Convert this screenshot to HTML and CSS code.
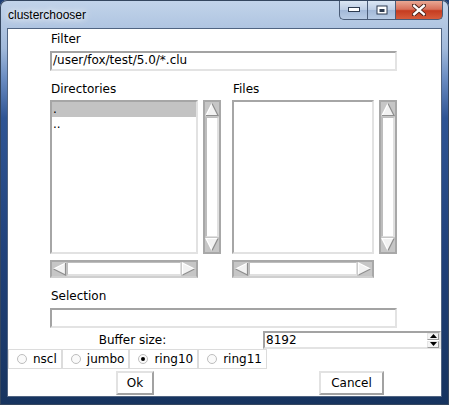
FILE: index.html
```html
<!DOCTYPE html>
<html>
<head>
<meta charset="utf-8">
<title>clusterchooser</title>
<link rel="stylesheet" href="styles.css">
</head>
<body>
<div class="window">
  <div class="titlebar">
    <span class="title">clusterchooser</span>
    <div class="caps">
      <div class="cap min"><svg width="12" height="6" viewBox="0 0 12 6"><rect x="0.5" y="0.5" width="11" height="4" fill="#fff" stroke="#2d3b50"/></svg></div>
      <div class="cap max"><svg width="12" height="10" viewBox="0 0 12 10"><rect x="0.5" y="0.5" width="11" height="9" fill="#2d3b50"/><rect x="1.5" y="1.5" width="9" height="7" fill="#fff"/><rect x="3.5" y="4" width="5" height="3" fill="#2d3b50"/></svg></div>
      <div class="cap close"><svg width="14" height="12" viewBox="0 0 14 12"><path d="M2 1.5 L12 10.5 M12 1.5 L2 10.5" stroke="#4a2018" stroke-width="4.2" stroke-linecap="square"/><path d="M2.2 1.8 L11.8 10.2 M11.8 1.8 L2.2 10.2" stroke="#fff" stroke-width="2.4" stroke-linecap="square"/></svg></div>
    </div>
  </div>
  <div class="client">
    <div class="label">Filter</div>
    <div class="entry">/user/fox/test/5.0/*.clu</div>

    <div class="lists">
      <div class="col col-dirs">
        <div class="label-in">Directories</div>
        <div class="listrow">
          <div class="listbox list-dirs">
            <div class="item selected">.</div>
            <div class="item">..</div>
          </div>
          <div class="vscroll">
            <div class="varrow"><svg width="14" height="15" viewBox="0 0 14 15"><polygon points="7,1.5 13,13.5 1,13.5" fill="#f2f2f2"/><path d="M7 1.5 L1 13.5" stroke="#fff" stroke-width="1.2" fill="none"/><path d="M7 1.5 L13 13.5 L1 13.5" stroke="#8e8e8e" stroke-width="1.2" fill="none"/></svg></div>
            <div class="vthumb"></div>
            <div class="varrow"><svg width="14" height="15" viewBox="0 0 14 15"><polygon points="1,1.5 13,1.5 7,13.5" fill="#f2f2f2"/><path d="M13 1.5 L1 1.5 L7 13.5" stroke="#fff" stroke-width="1.2" fill="none"/><path d="M13 1.5 L7 13.5" stroke="#8e8e8e" stroke-width="1.2" fill="none"/></svg></div>
          </div>
        </div>
        <div class="hscroll hs-dirs">
          <div class="harrow"><svg width="15" height="14" viewBox="0 0 15 14"><polygon points="1.5,7 13.5,1 13.5,13" fill="#f2f2f2"/><path d="M1.5 7 L13.5 1" stroke="#fff" stroke-width="1.2" fill="none"/><path d="M13.5 1 L13.5 13 L1.5 7" stroke="#8e8e8e" stroke-width="1.2" fill="none"/></svg></div>
          <div class="hthumb"></div>
          <div class="harrow"><svg width="15" height="14" viewBox="0 0 15 14"><polygon points="1.5,1 13.5,7 1.5,13" fill="#f2f2f2"/><path d="M1.5 13 L1.5 1 L13.5 7" stroke="#fff" stroke-width="1.2" fill="none"/><path d="M13.5 7 L1.5 13" stroke="#8e8e8e" stroke-width="1.2" fill="none"/></svg></div>
        </div>
      </div>

      <div class="col col-files">
        <div class="label-in">Files</div>
        <div class="listrow">
          <div class="listbox list-files"></div>
          <div class="vscroll">
            <div class="varrow"><svg width="14" height="15" viewBox="0 0 14 15"><polygon points="7,1.5 13,13.5 1,13.5" fill="#f2f2f2"/><path d="M7 1.5 L1 13.5" stroke="#fff" stroke-width="1.2" fill="none"/><path d="M7 1.5 L13 13.5 L1 13.5" stroke="#8e8e8e" stroke-width="1.2" fill="none"/></svg></div>
            <div class="vthumb"></div>
            <div class="varrow"><svg width="14" height="15" viewBox="0 0 14 15"><polygon points="1,1.5 13,1.5 7,13.5" fill="#f2f2f2"/><path d="M13 1.5 L1 1.5 L7 13.5" stroke="#fff" stroke-width="1.2" fill="none"/><path d="M13 1.5 L7 13.5" stroke="#8e8e8e" stroke-width="1.2" fill="none"/></svg></div>
          </div>
        </div>
        <div class="hscroll hs-files">
          <div class="harrow"><svg width="15" height="14" viewBox="0 0 15 14"><polygon points="1.5,7 13.5,1 13.5,13" fill="#f2f2f2"/><path d="M1.5 7 L13.5 1" stroke="#fff" stroke-width="1.2" fill="none"/><path d="M13.5 1 L13.5 13 L1.5 7" stroke="#8e8e8e" stroke-width="1.2" fill="none"/></svg></div>
          <div class="hthumb"></div>
          <div class="harrow"><svg width="15" height="14" viewBox="0 0 15 14"><polygon points="1.5,1 13.5,7 1.5,13" fill="#f2f2f2"/><path d="M1.5 13 L1.5 1 L13.5 7" stroke="#fff" stroke-width="1.2" fill="none"/><path d="M13.5 7 L1.5 13" stroke="#8e8e8e" stroke-width="1.2" fill="none"/></svg></div>
        </div>
      </div>
    </div>

    <div class="label sel-label">Selection</div>
    <div class="entry"></div>

    <div class="buffer-row">
      <span class="buffer-label">Buffer size:</span>
      <div class="spin">
        <span class="spin-value">8192</span>
        <div class="spin-arrows">
          <div class="spin-btn"><svg width="9" height="5" viewBox="0 0 9 5"><polygon points="4.5,0 9,5 0,5" fill="#000"/></svg></div>
          <div class="spin-btn"><svg width="9" height="5" viewBox="0 0 9 5"><polygon points="0,0 9,0 4.5,5" fill="#000"/></svg></div>
        </div>
      </div>
    </div>

    <div class="radio-row">
      <label class="radio-cell"><span class="radio"></span>nscl</label>
      <label class="radio-cell"><span class="radio"></span>jumbo</label>
      <label class="radio-cell"><span class="radio checked"></span>ring10</label>
      <label class="radio-cell"><span class="radio"></span>ring11</label>
    </div>

    <div class="button-row">
      <button class="btn btn-ok">Ok</button>
      <button class="btn btn-cancel">Cancel</button>
    </div>
  </div>
</div>
</body>
</html>
```

FILE: styles.css
```css
* { box-sizing: border-box; }
html, body { margin: 0; padding: 0; }
body {
  width: 449px;
  height: 405px;
  overflow: hidden;
  background: #1d3e74;
  font-family: "DejaVu Sans", sans-serif;
  font-size: 12px;
  color: #000;
}

.window {
  width: 449px;
  height: 405px;
  display: flex;
  flex-direction: column;
  border-radius: 7px 7px 0 0;
  background: linear-gradient(180deg, #c2d4ea 0px, #b1c6e2 26px, #a2badb 48px, #6b8dc2 78px, #2f5594 118px, #21427b 250px, #17345f 405px);
  box-shadow: inset 0 0 0 1px #34465f;
}

.titlebar {
  height: 29px;
  flex: none;
  display: flex;
  padding: 0 6px 0 8px;
}
.title {
  font-family: "Liberation Sans", Arial, sans-serif;
  font-size: 12px;
  line-height: 14px;
  padding-top: 8px;
  color: #000;
  text-shadow: 0 0 6px #fff, 0 0 10px rgba(255,255,255,0.9);
}
.caps {
  margin-left: auto;
  margin-top: 1px;
  height: 19px;
  display: flex;
}
.cap {
  height: 19px;
  display: flex;
  align-items: center;
  justify-content: center;
  border: 1px solid #4a5c77;
  border-top: none;
}
.cap svg { display: block; }
.min {
  width: 28px;
  border-right: none;
  border-radius: 0 0 0 5px;
  background: linear-gradient(180deg, #dbe6f3 0%, #bccde4 48%, #a3b9d8 52%, #b8cbe4 100%);
}
.max {
  width: 28px;
  border-right: none;
  background: linear-gradient(180deg, #dbe6f3 0%, #bccde4 48%, #a3b9d8 52%, #b8cbe4 100%);
}
.close {
  width: 48px;
  border-radius: 0 0 5px 0;
  background: linear-gradient(180deg, #eaa894 0%, #d8705a 46%, #c53c20 54%, #d65c3c 100%);
}

.client {
  margin: 0 8px;
  height: 367px;
  flex: none;
  background: #fff;
  box-shadow: 0 0 0 1px #506482;
  display: flex;
  flex-direction: column;
  padding-top: 3px;
}

.label {
  margin-left: 42px;
  padding-left: 1px;
  line-height: 14px;
}
.label-in {
  padding-left: 1px;
  line-height: 14px;
}

.entry {
  margin-left: 42px;
  margin-top: 5px;
  width: 347px;
  height: 20px;
  border: 2px solid;
  border-color: #a3a3a3 #e3e3e3 #e3e3e3 #a3a3a3;
  line-height: 14px;
  padding: 0 1px;
  white-space: nowrap;
}

.lists {
  display: flex;
  margin-left: 42px;
  margin-top: 11px;
}
.col-files { margin-left: 11px; }

.listrow {
  display: flex;
  gap: 5px;
  height: 154px;
  margin-top: 4px;
}
.listbox {
  height: 154px;
  border: 2px solid;
  border-color: #a6a6a6 #e2e2e2 #e2e2e2 #a6a6a6;
  background: #fff;
}
.list-dirs { width: 148px; }
.list-files { width: 142px; }
.item {
  height: 15px;
  line-height: 15px;
  padding-left: 1px;
}
.item.selected { background: #c3c3c3; }

.vscroll {
  width: 18px;
  height: 154px;
  border: 2px solid #a8a8a8;
  background: #c6c6c6;
  display: flex;
  flex-direction: column;
}
.varrow { height: 15px; flex: none; }
.varrow svg, .harrow svg { display: block; }
.vthumb {
  flex: 1;
  background: #fff;
  border-left: 2px solid #bdbdbd;
  border-right: 2px solid #e0e0e0;
  border-top: 1px solid #bdbdbd;
  border-bottom: 1px solid #e0e0e0;
}

.hscroll {
  height: 18px;
  margin-top: 6px;
  border: 2px solid #a8a8a8;
  border-bottom-color: #cfcfcf;
  background: #c6c6c6;
  display: flex;
}
.hs-dirs { width: 148px; }
.hs-files { width: 142px; }
.harrow { width: 15px; flex: none; }
.hthumb {
  flex: 1;
  background: #fff;
  border-top: 1px solid #bdbdbd;
  border-bottom: 2px solid #e0e0e0;
  border-left: 1px solid #bdbdbd;
  border-right: 1px solid #e0e0e0;
}

.sel-label { margin-top: 11px; }

.buffer-row {
  display: flex;
  height: 18px;
  margin-top: 3px;
  align-items: center;
}
.buffer-label {
  flex: 1;
  text-align: center;
  padding-right: 6px;
  line-height: 14px;
}
.spin {
  width: 178px;
  height: 18px;
  border: 2px solid;
  border-color: #a3a3a3 #e3e3e3 #e3e3e3 #a3a3a3;
  display: flex;
  align-items: center;
  padding-left: 1px;
}
.spin-value { line-height: 14px; }
.spin-arrows {
  margin-left: auto;
  display: flex;
  flex-direction: column;
  gap: 1px;
}
.spin-btn {
  width: 12px;
  height: 7px;
  border: 1px solid #9c9c9c;
  border-top-color: #e6e6e6;
  border-left-color: #e6e6e6;
  background: #f4f4f4;
  display: flex;
  align-items: center;
  justify-content: center;
}
.spin-btn svg { display: block; width: 7px; height: 4px; }

.radio-row {
  display: flex;
  height: 20px;
}
.radio-cell {
  display: flex;
  align-items: center;
  border: 1px solid #dcdcdc;
  padding: 0 4px 0 8px;
  line-height: 14px;
}
.radio {
  width: 10px;
  height: 10px;
  border-radius: 50%;
  border: 1px solid #bdbdbd;
  background: #fafafa;
  margin-right: 6px;
  display: flex;
  align-items: center;
  justify-content: center;
}
.radio.checked::after {
  content: "";
  width: 4px;
  height: 4px;
  border-radius: 50%;
  background: #000;
}

.button-row {
  display: flex;
  margin-top: 2px;
  padding-left: 108px;
}
.btn {
  height: 24px;
  border: 2px solid;
  border-color: #e2e2e2 #a2a2a2 #a2a2a2 #e2e2e2;
  background: #fff;
  font-family: "DejaVu Sans", sans-serif;
  font-size: 12px;
  line-height: 14px;
  color: #000;
  padding: 0;
  margin: 0;
}
.btn-ok { width: 38px; }
.btn-cancel { width: 65px; margin-left: 165px; }
```
